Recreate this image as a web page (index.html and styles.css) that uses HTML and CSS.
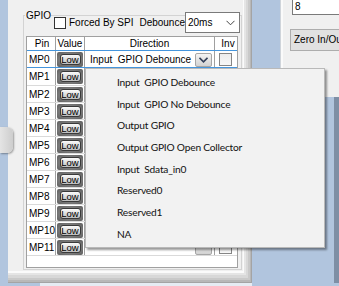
FILE: index.html
```html
<!DOCTYPE html>
<html>
<head>
<meta charset="utf-8">
<link rel="stylesheet" href="styles.css">
</head>
<body>
<div class="screen">
  <div class="top">
    <div class="lgap"></div>
    <div class="main">
      <div class="group">
        <div class="ghead">
          <span class="legend">GPIO</span>
          <span class="forced"><span class="cb"></span><span class="ftext">Forced By SPI</span></span>
          <span class="deblabel">Debounce</span>
          <div class="select"><span>20ms</span><svg class="chev" width="9" height="6" viewBox="0 0 9 6"><polyline points="0.5,0.8 4.5,4.8 8.5,0.8" fill="none" stroke="#444" stroke-width="1"/></svg></div>
        </div>
        <div class="grid">
          <div class="hrow"><div class="c pin hc">Pin</div><div class="c val hc">Value</div><div class="c hc">Direction</div><div class="c inv hc">Inv</div></div>
          <div class="row sel"><div class="c pin">MP0</div><div class="c val"><span class="lw"><span class="low">Low</span></span></div><div class="c dir"><span class="ctext">Input  GPIO Debounce</span><span class="dd"><svg width="9" height="6" viewBox="0 0 9 6"><polyline points="0.5,0.8 4.5,4.8 8.5,0.8" fill="none" stroke="#34405a" stroke-width="1.6"/></svg></span></div><div class="c inv"><span class="ck"></span></div></div>
          <div class="row r1"><div class="c pin">MP1</div><div class="c val"><span class="lw"><span class="low">Low</span></span></div><div class="c dir"><span class="ctext"></span><span class="dd"></span></div><div class="c inv"><span class="ck"></span></div></div>
          <div class="row"><div class="c pin">MP2</div><div class="c val"><span class="lw"><span class="low">Low</span></span></div><div class="c dir"><span class="ctext"></span><span class="dd"></span></div><div class="c inv"><span class="ck"></span></div></div>
          <div class="row"><div class="c pin">MP3</div><div class="c val"><span class="lw"><span class="low">Low</span></span></div><div class="c dir"><span class="ctext"></span><span class="dd"></span></div><div class="c inv"><span class="ck"></span></div></div>
          <div class="row"><div class="c pin">MP4</div><div class="c val"><span class="lw"><span class="low">Low</span></span></div><div class="c dir"><span class="ctext"></span><span class="dd"></span></div><div class="c inv"><span class="ck"></span></div></div>
          <div class="row"><div class="c pin">MP5</div><div class="c val"><span class="lw"><span class="low">Low</span></span></div><div class="c dir"><span class="ctext"></span><span class="dd"></span></div><div class="c inv"><span class="ck"></span></div></div>
          <div class="row"><div class="c pin">MP6</div><div class="c val"><span class="lw"><span class="low">Low</span></span></div><div class="c dir"><span class="ctext"></span><span class="dd"></span></div><div class="c inv"><span class="ck"></span></div></div>
          <div class="row"><div class="c pin">MP7</div><div class="c val"><span class="lw"><span class="low">Low</span></span></div><div class="c dir"><span class="ctext"></span><span class="dd"></span></div><div class="c inv"><span class="ck"></span></div></div>
          <div class="row"><div class="c pin">MP8</div><div class="c val"><span class="lw"><span class="low">Low</span></span></div><div class="c dir"><span class="ctext"></span><span class="dd"></span></div><div class="c inv"><span class="ck"></span></div></div>
          <div class="row"><div class="c pin">MP9</div><div class="c val"><span class="lw"><span class="low">Low</span></span></div><div class="c dir"><span class="ctext"></span><span class="dd"></span></div><div class="c inv"><span class="ck"></span></div></div>
          <div class="row"><div class="c pin">MP10</div><div class="c val"><span class="lw"><span class="low">Low</span></span></div><div class="c dir"><span class="ctext"></span><span class="dd"></span></div><div class="c inv"><span class="ck"></span></div></div>
          <div class="row"><div class="c pin">MP11</div><div class="c val"><span class="lw"><span class="low">Low</span></span></div><div class="c dir"><span class="ctext"></span><span class="dd"></span></div><div class="c inv"><span class="ck"></span></div></div>
        </div>
      </div>
    </div>
    <div class="bgap"></div>
    <div class="rcol">
      <div class="rpanel">
        <div class="tbox">8</div>
        <div class="zero">Zero In/Out</div>
      </div>
      <div class="rrest"></div>
    </div>
  </div>
  <div class="bottom"><div class="bline"></div></div>
  <div class="tab"></div>
  <div class="menu">
    <div class="mi">Input  GPIO Debounce</div>
    <div class="mi">Input  GPIO No Debounce</div>
    <div class="mi">Output GPIO</div>
    <div class="mi">Output GPIO Open Collector</div>
    <div class="mi">Input  Sdata_in0</div>
    <div class="mi">Reserved0</div>
    <div class="mi">Reserved1</div>
    <div class="mi">NA</div>
  </div>
</div>
</body>
</html>
```
FILE: styles.css
```css
* { box-sizing: border-box; }
html, body { margin: 0; padding: 0; }
body {
  width: 339px;
  height: 286px;
  overflow: hidden;
  background: #b1c5de;
  font-family: "Liberation Sans", Arial, sans-serif;
  font-size: 10px;
  color: #000;
}
.screen { position: relative; width: 339px; height: 286px; }
.top { display: flex; height: 283px; }
.lgap { width: 8px; flex: none; }
.main {
  width: 244px;
  flex: none;
  height: 283px;
  background: #f0f0f0;
  padding-left: 15px;
  padding-top: 15px;
  box-shadow:
    inset -1px -1px 0 #a4a4a4,
    inset -2px -3px 0 #b8b8b8,
    inset -4px -5px 0 #c9c9c9,
    inset -6px -8px 0 #d8d8d8,
    inset -8px -10px 0 #e5e5e5,
    inset -9px -12px 0 #fbfbfb;
}
.group {
  width: 219px;
  height: 255px;
  border: 1px solid #d3d3d3;
  padding: 0 1px 0 2px;
}
.ghead {
  display: flex;
  align-items: flex-start;
  height: 23px;
  margin-top: -6px;
}
.legend {
  width: 26px;
  padding-left: 1px;
  margin-left: -1px;
  background: #f0f0f0;
  line-height: 11px;
  height: 11px;
}
.forced { display: flex; align-items: center; margin-left: 3px; margin-top: 7px; height: 12px; }
.cb { width: 12px; height: 12px; border: 1px solid #333; background: #fff; }
.ftext { margin-left: 3px; line-height: 12px; }
.deblabel { margin-left: auto; margin-top: 7px; line-height: 12px; }
.select {
  width: 55px;
  height: 21px;
  margin-top: 2px;
  border: 1px solid #7a7a7a;
  background: #fff;
  display: flex;
  align-items: center;
  justify-content: space-between;
  padding: 0 4px 0 2px;
}
.chev { margin-top: 1px; }
.grid {
  margin-top: 3px;
  width: 212px;
  height: 232px;
  border: 1px solid #a0a0a0;
  background: #fff;
  overflow: hidden;
}
.hrow, .row { display: grid; grid-template-columns: 29px 29px 130px 22px; }
.hrow { height: 13px; }
.c { border-right: 1px solid #a0a0a0; display: flex; align-items: center; }
.c.inv { border-right: none; }
.hc { justify-content: center; line-height: 12px; background: #fff; }
.row { height: 17px; border-bottom: 1px solid #dadada; }
.row.r1 { height: 18px; }
.row.sel { height: 18px; border-top: 1px solid #4595dc; border-bottom: 1px solid #4595dc; }
.pin { padding-left: 2px; }
.val { padding: 0 1px; }
.lw {
  width: 26px;
  height: 15px;
  border-radius: 2px;
  background: radial-gradient(ellipse at center, #9a9a9a 0%, #777 60%, #5e5e5e 100%);
  display: flex;
  align-items: center;
  justify-content: center;
}
.low {
  width: 21px;
  height: 11px;
  border: 1px solid #3a3a3a;
  border-radius: 3px;
  background: linear-gradient(#fbfbfb, #d6d6d6 60%, #bdbdbd);
  font-size: 9.5px;
  line-height: 9px;
  text-align: center;
}
.dir { justify-content: space-between; padding: 0 2px 0 5px; }
.ctext { white-space: pre; }
.dd {
  width: 17px;
  height: 14px;
  margin-top: 1px;
  border: 1px solid #a6a6a6;
  border-radius: 2px;
  background: linear-gradient(#f4f4f4, #d2d2d2);
  display: flex;
  align-items: center;
  justify-content: center;
}
.inv { padding-left: 4px; }
.ck { width: 13px; height: 13px; border: 1px solid #858585; background: linear-gradient(#ececec, #f7f7f7); }
.bgap { width: 28px; flex: none; }
.rcol { width: 59px; flex: none; display: flex; flex-direction: column; }
.rpanel {
  height: 97px;
  background: #f0f0f0;
  box-shadow: inset 1px 0 0 #cfd4da, inset 3px 0 0 #fafafa;
  padding-left: 12px;
  overflow: hidden;
}
.tbox {
  width: 50px;
  height: 15px;
  border: 1px solid #7a7a7a;
  border-top: none;
  background: #fff;
  padding-left: 2px;
  line-height: 14px;
}
.zero {
  width: 60px;
  height: 22px;
  margin-top: 14px;
  margin-left: -2px;
  border: 1px solid #adadad;
  background: #e1e1e1;
  padding-left: 3px;
  line-height: 20px;
  white-space: nowrap;
}
.rrest { flex: 1; box-shadow: inset -5px 0 0 #7e8fa5; }
.bottom { height: 3px; }
.bline { margin-left: 40px; width: 212px; height: 3px; background: #e6ecf3; }
.tab {
  position: absolute;
  left: 0;
  top: 127px;
  width: 13px;
  height: 26px;
  border-radius: 0 6px 6px 0;
  background: linear-gradient(90deg, #e4e4e4, #cdcdcd);
  box-shadow: 1px 1px 2px rgba(0,0,0,0.35);
}
.menu {
  position: absolute;
  left: 85px;
  top: 68px;
  width: 240px;
  height: 180px;
  background: #f2f2f2;
  border: 1px solid #b9b9b9;
  box-shadow: 2px 2px 2px rgba(0,0,0,0.4);
  padding-top: 3px;
  font-family: Lato, "Open Sans", sans-serif;
  font-size: 10.2px;
  letter-spacing: -0.2px;
  color: #111;
}
.mi { height: 21.7px; line-height: 21.7px; padding-left: 31px; white-space: pre; }
```
